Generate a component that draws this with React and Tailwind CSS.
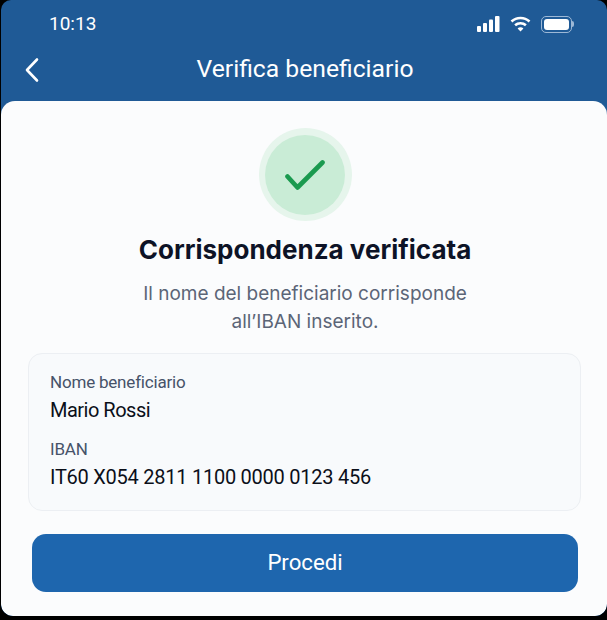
function SignalIcon() {
  return (
    <svg width="23" height="16" viewBox="0 0 23 16" fill="white">
      <rect x="0" y="10" width="4" height="6" rx="1" />
      <rect x="6" y="7" width="4" height="9" rx="1" />
      <rect x="12" y="3.5" width="4" height="12.5" rx="1" />
      <rect x="18" y="0" width="4.5" height="16" rx="1" />
    </svg>
  )
}

function WifiIcon() {
  return (
    <svg width="21" height="16" viewBox="0 0 20 16" fill="none" stroke="white" strokeWidth="2.6">
      <path d="M1 5.5c5-4.6 13-4.6 18 0" />
      <path d="M4.6 9.3c3-2.7 7.8-2.7 10.8 0" />
      <path d="M10 15.6l-2.9-3a4 4 0 0 1 5.8 0z" fill="white" stroke="none" />
    </svg>
  )
}

function BatteryIcon() {
  return (
    <div className="flex items-center">
      <div className="w-[31px] h-[17px] rounded-[5px] border border-[#9db8d6] p-[2px]">
        <div className="w-full h-full rounded-[3px] bg-white" />
      </div>
      <div className="w-[2px] h-[6px] rounded-r-sm bg-[#9db8d6]" />
    </div>
  )
}

export default function App() {
  return (
    <div className="w-[607px] h-[620px] bg-black overflow-hidden font-['Inter',sans-serif]">
      <div className="h-[616px] ml-px flex flex-col rounded-t-[10px] rounded-b-[12px] overflow-hidden bg-[#1f5a96]">
        {/* status bar */}
        <div className="h-[50px] pl-[48px] pr-[33px] pt-[12px] flex items-start justify-between text-white">
          <span className="text-[19px] leading-[24px] font-['Roboto',sans-serif]">10:13</span>
          <div className="flex items-center gap-[10px] h-[24px]">
            <SignalIcon />
            <WifiIcon />
            <BatteryIcon />
          </div>
        </div>

        {/* nav bar */}
        <div className="relative h-[51px] flex items-start justify-center pt-[4px] pl-[2px]">
          <svg className="absolute left-[22px] top-[7px]" width="18" height="26" viewBox="0 0 18 26" fill="none" stroke="white" strokeWidth="2.6" strokeLinecap="round" strokeLinejoin="round">
            <path d="M14 2.5L4 13l10 10.5" />
          </svg>
          <h1 className="text-[24.7px] leading-[30px] font-[450] text-white font-['Roboto',sans-serif]">Verifica beneficiario</h1>
        </div>

        {/* card */}
        <div className="flex-1 bg-[#fbfcfd] rounded-t-[14px] rounded-b-[12px] flex flex-col items-center pt-[27px] pl-[2px]">
          <div className="w-[93px] h-[93px] rounded-full bg-[#e6f5ec] flex items-center justify-center">
            <div className="w-[80px] h-[80px] rounded-full bg-[#c9ecd6] flex items-center justify-center">
              <svg width="40" height="30" viewBox="0 0 40 30" fill="none" stroke="#1a9a4f" strokeWidth="4.6" strokeLinecap="round" strokeLinejoin="round">
                <path d="M2.5 16.5L12.5 27.5L37.5 2.5" />
              </svg>
            </div>
          </div>

          <h2 className="mt-[12px] text-[26px] leading-[34px] font-bold text-[#0d1326]">Corrispondenza verificata</h2>
          <p className="mt-[13px] text-[19px] leading-[28px] text-[#5b6577] text-center">
            Il nome del beneficiario corrisponde
            <br />
            all’IBAN inserito.
          </p>

          <div className="mt-[17px] ml-[-1px] w-[553px] h-[158px] rounded-[14px] border border-[#eceff3] bg-[#f8fafc] px-[21px] pt-[18px] font-['Roboto',sans-serif]">
            <p className="text-[17px] leading-[20px] tracking-[-0.2px] text-[#465269]">Nome beneficiario</p>
            <p className="mt-[5px] text-[20px] leading-[26px] tracking-[-0.5px] text-[#0b0f19]">Mario Rossi</p>
            <p className="mt-[16px] text-[17px] leading-[20px] tracking-[-0.2px] text-[#465269]">IBAN</p>
            <p className="mt-[5px] text-[20px] leading-[26px] tracking-[-0.25px] text-[#0b0f19]">IT60 X054 2811 1100 0000 0123 456</p>
          </div>

          <button className="mt-[23px] w-[546px] h-[58px] rounded-[14px] bg-[#1e66ae] text-white text-[22.2px] font-[450] font-['Roboto',sans-serif]">
            Procedi
          </button>
        </div>
      </div>
    </div>
  )
}
